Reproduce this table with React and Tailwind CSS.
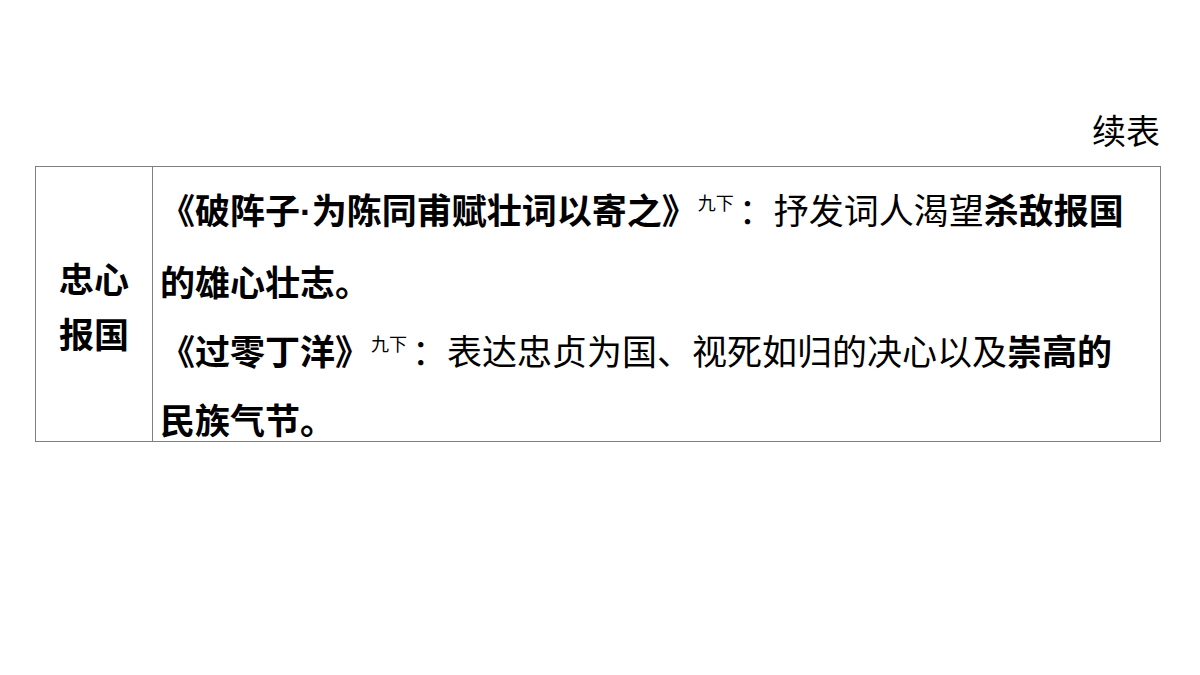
export default function App() {
  const font = { fontFamily: '"Noto Sans CJK SC", "Noto Sans", sans-serif' };
  return (
    <div className="w-[1200px] h-[675px] bg-white text-black" style={font}>
      <div className="pl-[35px] pr-[39px] pt-[106px]">
        <div className="text-right text-[34px] leading-[48px] mb-[12px] pr-[1px]">续表</div>
        <div className="flex border border-[#7f7f7f]">
          <div className="w-[117px] shrink-0 flex items-center justify-center border-r border-[#7f7f7f]">
            <div className="text-[35px] font-bold leading-[55px] text-center pt-[1px]">
              忠心
              <br />
              报国
            </div>
          </div>
          <div className="flex-1 pl-[7px] pt-[7px] text-[35px] leading-[69px]">
            <div className="whitespace-nowrap">
              <span className="font-bold">
                《破阵子<span className="font-['Liberation_Sans',sans-serif]">·</span>为陈同甫赋壮词以寄之》
              </span>
              <span className="text-[18px] align-top leading-[57px] ml-[1px] mr-[5px]">九下</span>
              <span>：抒发词人渴望</span>
              <span className="font-bold">杀敌报国</span>
            </div>
            <div className="whitespace-nowrap font-bold">的雄心壮志。</div>
            <div className="whitespace-nowrap">
              <span className="font-bold">《过零丁洋》</span>
              <span className="text-[18px] align-top leading-[57px] ml-[1px] mr-[5px]">九下</span>
              <span>：表达忠贞为国、视死如归的决心以及</span>
              <span className="font-bold">崇高的</span>
            </div>
            <div className="whitespace-nowrap font-bold leading-[45px] pt-[12px]">民族气节。</div>
          </div>
        </div>
      </div>
    </div>
  );
}
